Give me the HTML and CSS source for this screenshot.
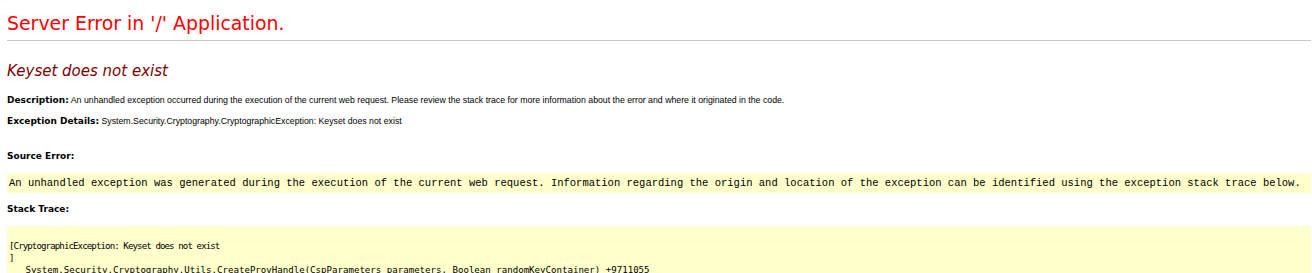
FILE: index.html
```html
<!DOCTYPE html>
<html>
<head>
<meta charset="utf-8">
<title>Keyset does not exist</title>
<link rel="stylesheet" href="styles.css">
</head>
<body>
<h1 class="title">Server Error in '/' Application.</h1>
<hr class="rule">
<h2 class="message">Keyset does not exist</h2>
<p class="info"><b class="label">Description:</b> An unhandled exception occurred during the execution of the current web request. Please review the stack trace for more information about the error and where it originated in the code.</p>
<p class="info info-ex"><b class="label">Exception Details:</b> System.Security.Cryptography.CryptographicException: Keyset does not exist</p>
<p class="section"><b class="label">Source Error:</b></p>
<div class="box box-src"><code class="src">An unhandled exception was generated during the execution of the current web request. Information regarding the origin and location of the exception can be identified using the exception stack trace below.</code></div>
<p class="section section-stack"><b class="label">Stack Trace:</b></p>
<div class="box box-stack"><pre class="trace"><span class="head">[CryptographicException: Keyset does not exist
]</span>
   System.Security.Cryptography.Utils.CreateProvHandle(CspParameters parameters, Boolean randomKeyContainer) +9711055
   System.Security.Cryptography.Utils.GetKeyPairHelper(CspAlgorithmType keyType, CspParameters parameters, Boolean randomKeyContainer, Int32 dwKeySize) +67
   System.Security.Cryptography.RSACryptoServiceProvider.GetKeyPair() +74
</pre></div>
</body>
</html>
```
FILE: styles.css
```css
html, body {
  background: #ffffff;
}
body {
  margin: 0 1px 0 7px;
  font-family: "Liberation Sans", Arial, sans-serif;
  color: #000000;
}
.title {
  margin: 10px 0 0 0;
  font-family: "DejaVu Sans", Verdana, sans-serif;
  font-weight: normal;
  font-size: 18.9px;
  line-height: 26px;
  color: #ff0000;
}
.rule {
  margin: 4px 0 0 0;
  border: 0;
  border-top: 1px solid #c8c8c8;
  height: 0;
}
.message {
  margin: 20px 0 0 0;
  font-family: "DejaVu Sans", Verdana, sans-serif;
  font-weight: normal;
  font-style: italic;
  font-size: 15px;
  line-height: 20px;
  color: #800000;
}
.info {
  margin: 13px 0 0 0;
  font-size: 8.75px;
  line-height: 12px;
}
.info-ex {
  margin-top: 9px;
}
.label {
  font-family: "DejaVu Sans", Verdana, sans-serif;
  font-weight: bold;
  font-size: 9px;
}
.section {
  margin: 21px 0 0 0;
  line-height: 12px;
}
.section-stack {
  margin-top: 8px;
}
.box {
  background: #ffffcc;
  margin-top: 11px;
}
.box-src {
  height: 20px;
  display: flex;
  align-items: center;
  padding-left: 2px;
}
.src {
  font-family: "Liberation Mono", "Courier New", monospace;
  font-size: 10.5px;
  white-space: nowrap;
}
.box-stack {
  padding: 14px 0 12px 2px;
}
.trace {
  margin: 0;
  font-family: "DejaVu Sans Mono", monospace;
  font-size: 9.1px;
  line-height: 12px;
}
.head {
  letter-spacing: -0.9px;
}
```
